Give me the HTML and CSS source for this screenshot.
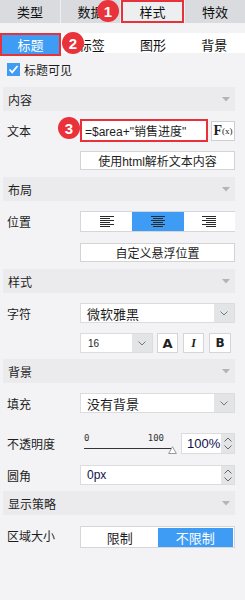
FILE: index.html
```html
<!DOCTYPE html>
<html>
<head>
<meta charset="utf-8">
<link rel="stylesheet" href="styles.css">
</head>
<body>
<div class="tabs">
  <div class="tab">类型</div>
  <div class="tab">数据</div>
  <div class="tab active">样式</div>
  <div class="tab">特效</div>
  <span class="badge b1">1</span>
</div>
<div class="subtabs">
  <div class="subtab active">标题</div>
  <div class="subtab">标签</div>
  <div class="subtab">图形</div>
  <div class="subtab">背景</div>
  <span class="badge b2">2</span>
</div>
<div class="check">
  <span class="box"><svg width="13" height="13" viewBox="0 0 13 13"><polyline points="2.5,6.5 5.2,9.3 10.5,3" fill="none" stroke="#fff" stroke-width="1.8"/></svg></span>
  <span>标题可见</span>
</div>
<div class="panel">
  <div class="sec s-first"><span>内容</span><svg class="caret" width="8" height="5" viewBox="0 0 8 5"><polygon points="0,0 8,0 4,4.5" fill="#b4b4b6"/></svg></div>
  <div class="row r-text">
    <span class="lbl">文本</span>
    <div class="split">
      <div class="textin">=$area+"销售进度"</div>
      <div class="fx"><span class="fx-f">F</span><span class="fx-x">(x)</span></div>
    </div>
    <span class="badge b3">3</span>
  </div>
  <div class="row r-html">
    <span class="lbl"></span>
    <div class="btn">使用html解析文本内容</div>
  </div>

  <div class="sec s-mid"><span>布局</span><svg class="caret" width="8" height="5" viewBox="0 0 8 5"><polygon points="0,0 8,0 4,4.5" fill="#b4b4b6"/></svg></div>
  <div class="row r-pos">
    <span class="lbl">位置</span>
    <div class="seg seg3">
      <div class="segitem"><svg width="14" height="12" viewBox="0 0 14 12"><g stroke="#2a2a2a" stroke-width="1"><line x1="0" y1="0.5" x2="14" y2="0.5"/><line x1="0" y1="2.5" x2="10" y2="2.5"/><line x1="0" y1="4.5" x2="14" y2="4.5"/><line x1="0" y1="6.5" x2="10" y2="6.5"/><line x1="0" y1="8.5" x2="14" y2="8.5"/><line x1="0" y1="10.5" x2="10" y2="10.5"/></g></svg></div>
      <div class="segitem on"><svg width="14" height="12" viewBox="0 0 14 12"><g stroke="#2a2a2a" stroke-width="1"><line x1="0" y1="0.5" x2="14" y2="0.5"/><line x1="2" y1="2.5" x2="12" y2="2.5"/><line x1="0" y1="4.5" x2="14" y2="4.5"/><line x1="2" y1="6.5" x2="12" y2="6.5"/><line x1="0" y1="8.5" x2="14" y2="8.5"/><line x1="2" y1="10.5" x2="12" y2="10.5"/></g></svg></div>
      <div class="segitem"><svg width="14" height="12" viewBox="0 0 14 12"><g stroke="#2a2a2a" stroke-width="1"><line x1="0" y1="0.5" x2="14" y2="0.5"/><line x1="4" y1="2.5" x2="14" y2="2.5"/><line x1="0" y1="4.5" x2="14" y2="4.5"/><line x1="4" y1="6.5" x2="14" y2="6.5"/><line x1="0" y1="8.5" x2="14" y2="8.5"/><line x1="4" y1="10.5" x2="14" y2="10.5"/></g></svg></div>
    </div>
  </div>
  <div class="row r-float">
    <span class="lbl"></span>
    <div class="btn">自定义悬浮位置</div>
  </div>

  <div class="sec s-mid"><span>样式</span><svg class="caret" width="8" height="5" viewBox="0 0 8 5"><polygon points="0,0 8,0 4,4.5" fill="#b4b4b6"/></svg></div>
  <div class="row r-font">
    <span class="lbl">字符</span>
    <div class="select">
      <span class="val">微软雅黑</span>
      <span class="arrow"><svg width="8" height="5" viewBox="0 0 8 5"><polyline points="0.5,0.5 4,4 7.5,0.5" fill="none" stroke="#777" stroke-width="1"/></svg></span>
    </div>
  </div>
  <div class="row r-size">
    <span class="lbl"></span>
    <div class="sizeline">
      <div class="select small">
        <span class="val num">16</span>
        <span class="arrow"><svg width="8" height="5" viewBox="0 0 8 5"><polyline points="0.5,0.5 4,4 7.5,0.5" fill="none" stroke="#777" stroke-width="1"/></svg></span>
      </div>
      <div class="fbtn fa">A</div>
      <div class="fbtn fi">I</div>
      <div class="fbtn fb">B</div>
    </div>
  </div>

  <div class="sec s-bg"><span>背景</span><svg class="caret" width="8" height="5" viewBox="0 0 8 5"><polygon points="0,0 8,0 4,4.5" fill="#b4b4b6"/></svg></div>
  <div class="row r-fill">
    <span class="lbl">填充</span>
    <div class="select">
      <span class="val">没有背景</span>
      <span class="arrow"><svg width="8" height="5" viewBox="0 0 8 5"><polyline points="0.5,0.5 4,4 7.5,0.5" fill="none" stroke="#777" stroke-width="1"/></svg></span>
    </div>
  </div>
  <div class="row r-op">
    <span class="lbl">不透明度</span>
    <div class="opline">
      <div class="slider">
        <div class="ticks"><span>0</span><span>100</span></div>
        <div class="track"></div>
        <svg class="thumb" width="9" height="8" viewBox="0 0 9 8"><polygon points="4.5,0.8 8.4,7.5 0.6,7.5" fill="#fff" stroke="#999" stroke-width="1"/></svg>
      </div>
      <div class="spin pct">
        <span class="val">100%</span>
        <span class="spinbtn"><svg width="8" height="5" viewBox="0 0 8 5"><polyline points="0.5,4.5 4,1 7.5,4.5" fill="none" stroke="#666" stroke-width="1"/></svg><svg width="8" height="5" viewBox="0 0 8 5"><polyline points="0.5,0.5 4,4 7.5,0.5" fill="none" stroke="#666" stroke-width="1"/></svg></span>
      </div>
    </div>
  </div>
  <div class="row r-rad">
    <span class="lbl">圆角</span>
    <div class="spin">
      <span class="val">0px</span>
      <span class="spinbtn"><svg width="8" height="5" viewBox="0 0 8 5"><polyline points="0.5,4.5 4,1 7.5,4.5" fill="none" stroke="#666" stroke-width="1"/></svg><svg width="8" height="5" viewBox="0 0 8 5"><polyline points="0.5,0.5 4,4 7.5,0.5" fill="none" stroke="#666" stroke-width="1"/></svg></span>
    </div>
  </div>

  <div class="sec s-last"><span>显示策略</span><svg class="caret" width="8" height="5" viewBox="0 0 8 5"><polygon points="0,0 8,0 4,4.5" fill="#b4b4b6"/></svg></div>
  <div class="row r-area">
    <span class="lbl top">区域大小</span>
    <div class="seg seg2">
      <div class="segitem">限制</div>
      <div class="segitem on">不限制</div>
    </div>
  </div>
</div>
</body>
</html>
```

FILE: styles.css
```css
* { box-sizing: border-box; margin: 0; padding: 0; }
html, body { background: #f3f3f5; }
body {
  width: 245px;
  height: 600px;
  overflow: hidden;
  font-family: "Liberation Sans", "Noto Sans CJK SC", sans-serif;
  font-size: 12px;
  color: #1e1e1e;
}

/* top tabs */
.tabs {
  position: relative;
  display: grid;
  grid-template-columns: 60px 59px 63px 1fr;
  column-gap: 1px;
  height: 23px;
  background: #eef0f2;
}
.tab {
  display: flex;
  align-items: center;
  justify-content: center;
  background: #d9dbdf;
  font-size: 13px;
  color: #111;
}
.tab.active {
  background: #edeef0;
  border: 2px solid #e8323b;
}

/* badges */
.badge {
  position: absolute;
  width: 22px;
  height: 22px;
  border-radius: 50%;
  background: #ea323a;
  color: #fff;
  font-family: "Liberation Sans", sans-serif;
  font-weight: bold;
  font-size: 15px;
  display: flex;
  align-items: center;
  justify-content: center;
}
.b1 { left: 97px; top: 0; }
.b2 { left: 62px; top: -1px; }
.b3 { left: 55px; top: -2px; }

/* sub tabs */
.subtabs {
  position: relative;
  margin-top: 10px;
  display: grid;
  grid-template-columns: repeat(4, 1fr);
  height: 20px;
  background: #fff;
}
.subtab {
  display: flex;
  align-items: center;
  justify-content: center;
  font-size: 13px;
  color: #111;
}
.subtab.active {
  background: #3f9cf4;
  color: #fff;
  border: 2px solid #e8323b;
}

/* checkbox */
.check {
  display: flex;
  align-items: center;
  gap: 4px;
  margin: 10px 0 0 7px;
  height: 13px;
  font-size: 12px;
}
.box {
  width: 13px;
  height: 13px;
  background: #3f9cf4;
  display: flex;
}

/* panel */
.panel { padding-left: 3px; width: 235px; }
.sec {
  height: 24px;
  background: #ebebed;
  display: flex;
  align-items: center;
  justify-content: space-between;
  padding: 0 5px 0 5px;
}
.s-first { margin-top: 11px; }
.s-mid { margin-top: 7px; }
.s-bg { margin-top: 6px; }
.s-last { margin-top: 6px; }

.row {
  position: relative;
  display: grid;
  grid-template-columns: 73px 155px;
  padding-left: 4px;
  align-items: center;
}
.lbl { font-size: 12px; }
.lbl.top { align-self: start; padding-top: 1px; }

.r-text { margin-top: 8px; height: 23px; }
.r-html { margin-top: 9px; height: 19px; }
.r-pos { margin-top: 10px; height: 21px; }
.r-float { margin-top: 11px; height: 19px; }
.r-font { margin-top: 10px; height: 20px; }
.r-size { margin-top: 10px; height: 20px; }
.r-fill { margin-top: 10px; height: 20px; }
.r-op { margin-top: 20px; height: 21px; }
.r-rad { margin-top: 11px; height: 20px; }
.r-area { margin-top: 11px; height: 22px; }

.split {
  display: flex;
  align-items: center;
  gap: 3px;
  height: 23px;
}
.textin {
  width: 128px;
  height: 23px;
  border: 2px solid #e8323b;
  background: #fff;
  display: flex;
  align-items: center;
  padding-left: 3px;
  font-size: 12px;
  white-space: nowrap;
}
.fx {
  width: 24px;
  height: 20px;
  border: 1px solid #cfcfd2;
  background: #fff;
  display: flex;
  align-items: center;
  justify-content: center;
  font-family: "Liberation Serif", serif;
  color: #222;
}
.fx-f { font-size: 14px; font-weight: bold; }
.fx-x { font-size: 9px; }

.btn {
  height: 19px;
  border: 1px solid #d3d3d6;
  background: #fff;
  display: flex;
  align-items: center;
  justify-content: center;
  font-size: 12px;
}

/* segmented */
.seg {
  height: 100%;
  border: 1px solid #d5d6d9;
  background: #fff;
  display: grid;
}
.seg3 { grid-template-columns: repeat(3, 1fr); border-right: 0; padding: 0; }
.seg2 { grid-template-columns: 1fr 1fr; padding: 1px 1px 0 1px; }
.segitem {
  display: flex;
  align-items: center;
  justify-content: center;
  font-size: 13px;
}
.segitem.on { background: #3f9cf4; color: #fff; }

/* selects */
.select {
  height: 20px;
  border: 1px solid #dcdcdf;
  background: #fff;
  display: flex;
  align-items: stretch;
}
.select .val {
  flex: 1;
  display: flex;
  align-items: center;
  padding-left: 6px;
  font-size: 13px;
}
.select .val.num { font-size: 10px; padding-left: 7px; }
.arrow {
  width: 20px;
  background: #e3e4e6;
  display: flex;
  align-items: center;
  justify-content: center;
}
.sizeline {
  display: flex;
  align-items: center;
  height: 20px;
}
.select.small { width: 73px; }
.fbtn {
  width: 21px;
  height: 20px;
  border: 1px solid #d5d5d8;
  background: #fff;
  display: flex;
  align-items: center;
  justify-content: center;
  color: #222;
}
.fa { margin-left: 4px; font-weight: bold; font-size: 13px; font-family: "DejaVu Sans", sans-serif; }
.fi { margin-left: 5px; font-style: italic; font-weight: bold; font-size: 12px; font-family: "Liberation Serif", serif; }
.fb { margin-left: 5px; width: 22px; font-weight: bold; font-size: 12px; font-family: "DejaVu Sans", sans-serif; }

/* opacity */
.opline {
  display: flex;
  align-items: stretch;
  height: 21px;
}
.slider {
  position: relative;
  width: 101px;
  padding-left: 4px;
}
.ticks {
  display: flex;
  justify-content: space-between;
  width: 80px;
  font-family: "DejaVu Sans Mono", monospace;
  font-size: 9px;
  line-height: 10px;
  color: #333;
}
.track {
  margin-top: 5px;
  width: 88px;
  height: 1px;
  background: #333;
}
.thumb {
  position: absolute;
  left: 88px;
  top: 13px;
}
.spin {
  height: 20px;
  border: 1px solid #dcdcdf;
  background: #fff;
  display: flex;
  align-items: stretch;
}
.spin.pct { width: 54px; height: 21px; }
.spin .val {
  flex: 1;
  display: flex;
  align-items: center;
  padding-left: 6px;
  font-size: 12px;
  color: #10104a;
}
.spin.pct .val { font-size: 13px; padding-left: 5px; }
.spinbtn {
  width: 13px;
  background: #e3e4e6;
  display: flex;
  flex-direction: column;
  align-items: center;
  justify-content: center;
  gap: 3px;
}
```
